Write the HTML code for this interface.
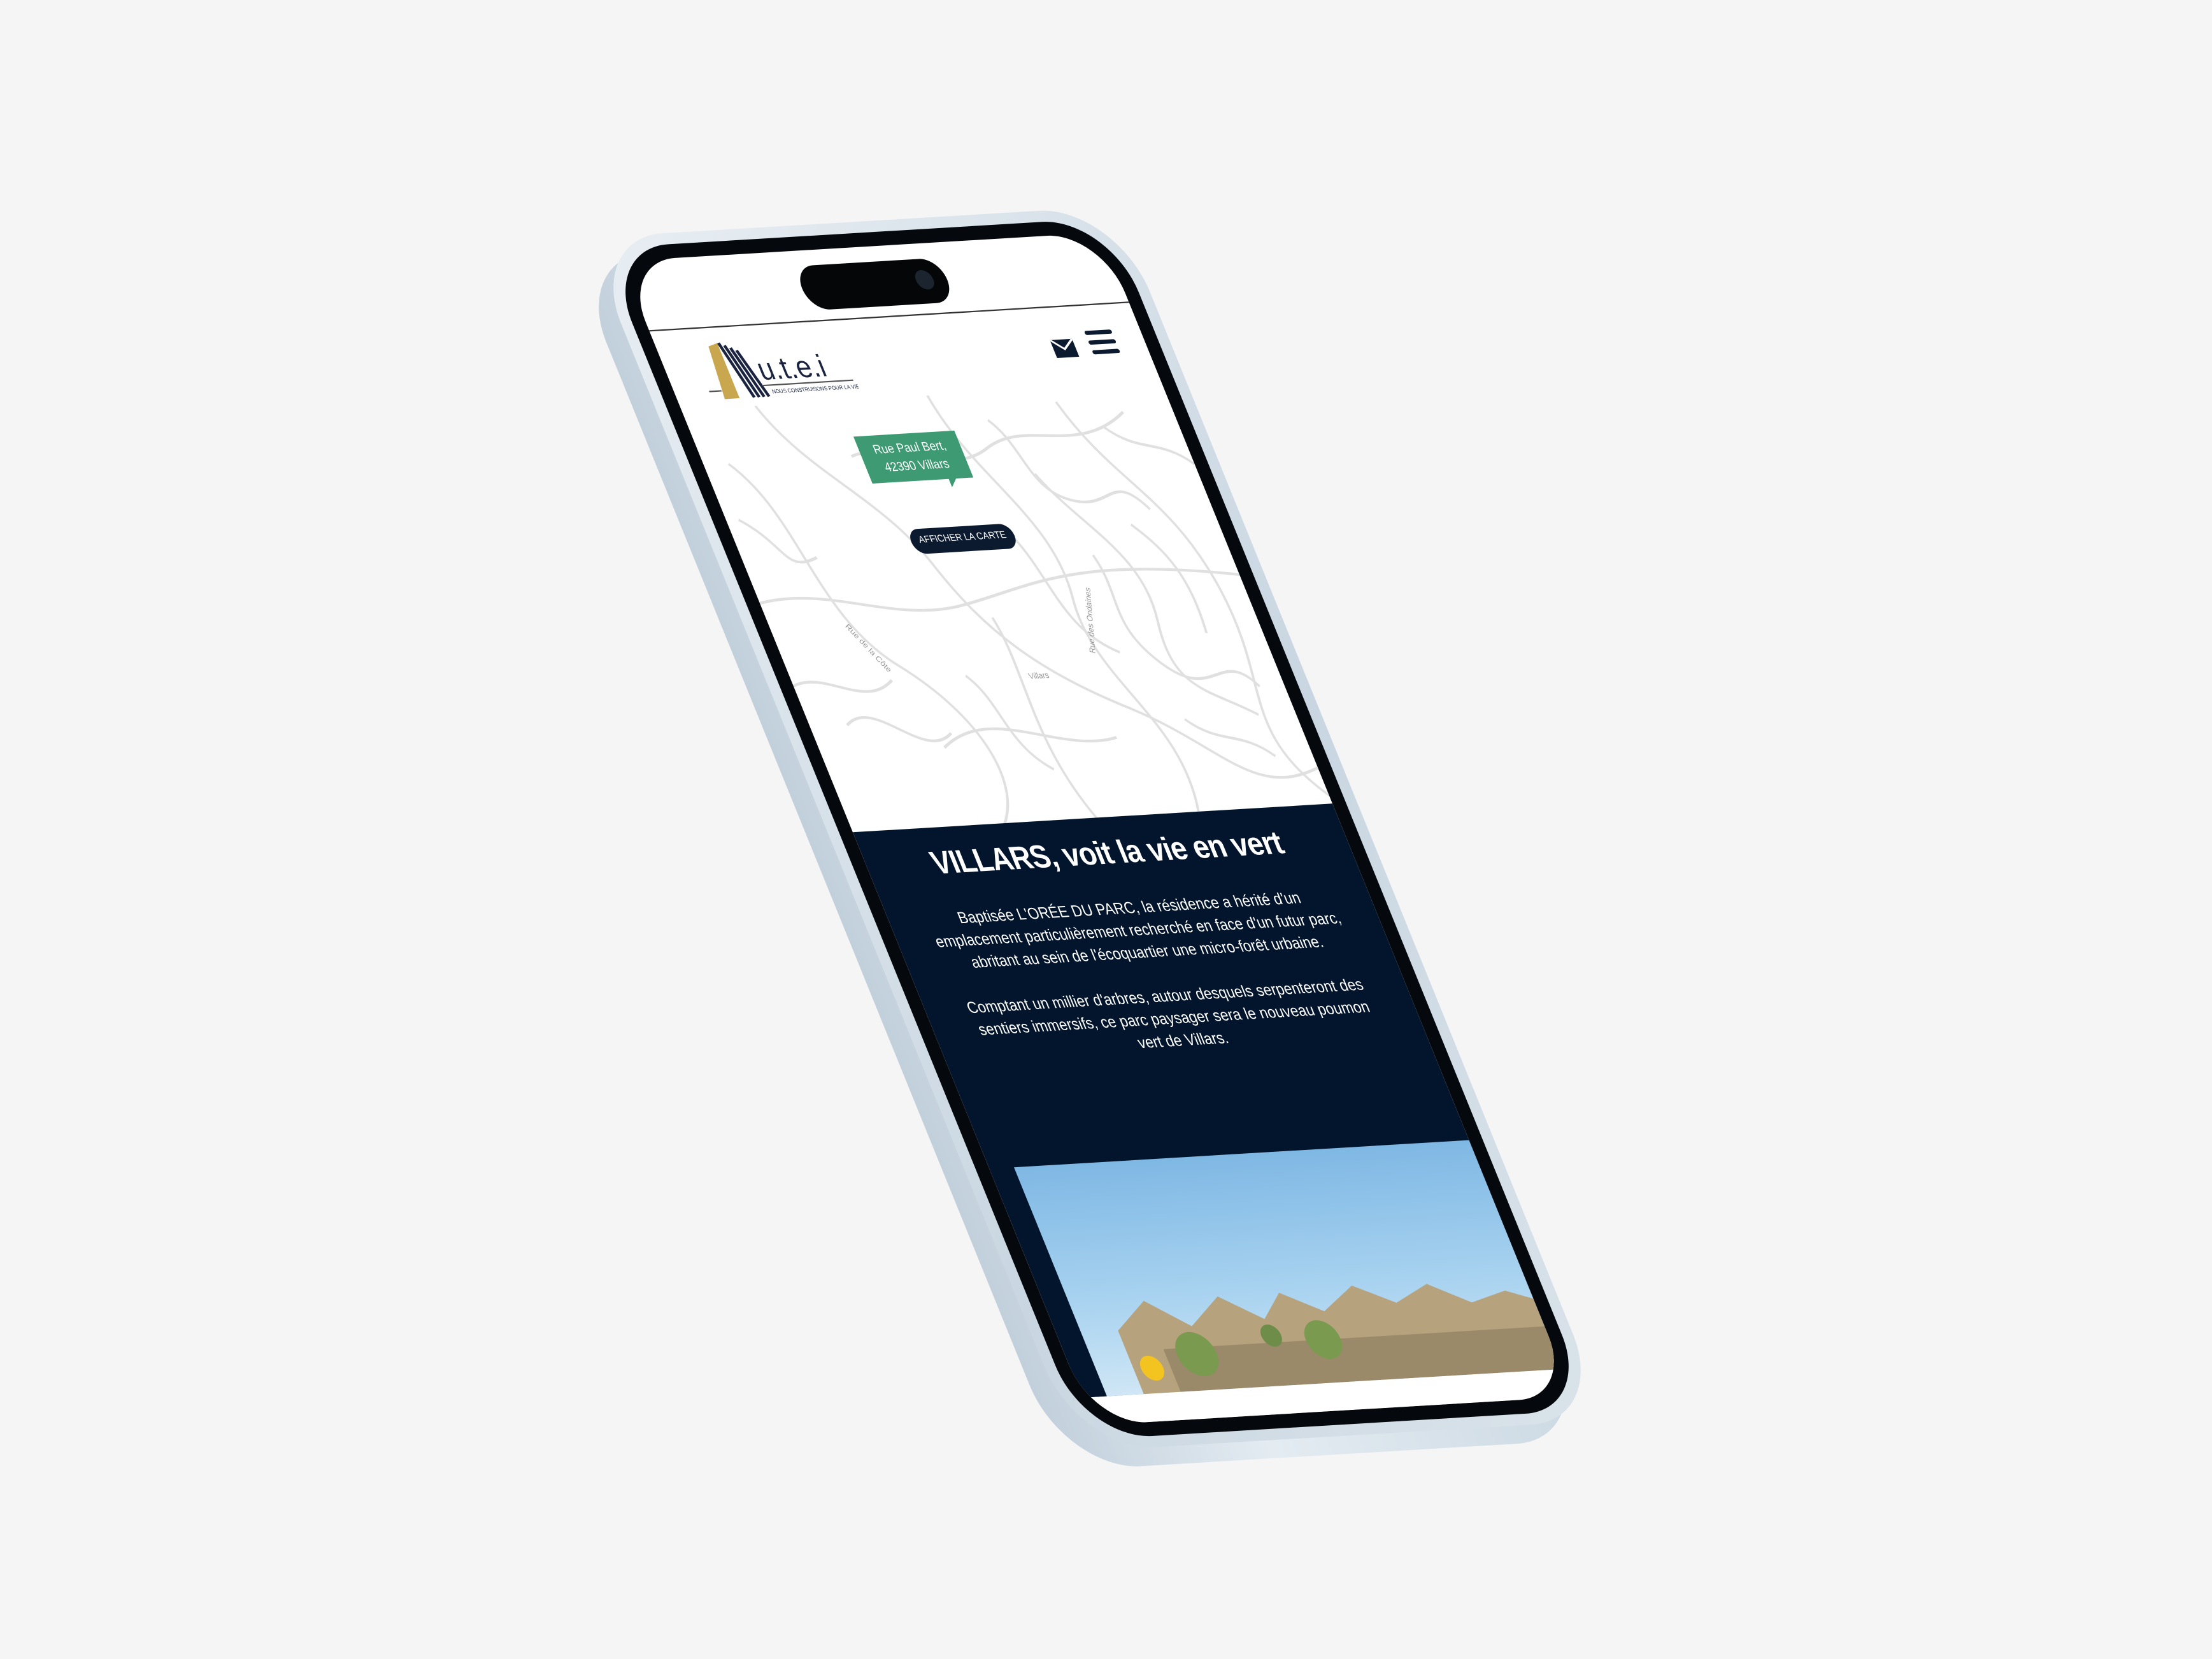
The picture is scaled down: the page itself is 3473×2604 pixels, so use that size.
<!DOCTYPE html>
<html><head><meta charset="utf-8"><style>
html,body{margin:0;padding:0}
body{width:3473px;height:2604px;background:#f5f5f5;position:relative;overflow:hidden;font-family:"Liberation Sans",sans-serif}
.t{position:absolute;left:0;top:0;width:390px;height:844px;transform-origin:0 0;transform:matrix(1.931,-0.1154,0.879,2.165,975,410)}
.abs{position:absolute}
</style></head><body>
<!-- phone side thickness -->
<div class="t" style="transform:matrix(1.931,-0.1154,0.879,2.165,952,440)">
  <div class="abs" style="left:-20px;top:-18px;width:430px;height:880px;border-radius:62px;background:linear-gradient(90deg,#c2d0dc,#e4ecf2 40%,#ccd9e3);"></div>
</div>
<div class="t">
  <div class="abs" style="left:-20px;top:-18px;width:430px;height:880px;border-radius:62px;background:linear-gradient(135deg,#e8eef3,#c9d6e1 60%,#dae3ea);"></div>
  <div class="abs" style="left:-11px;top:-10px;width:412px;height:864px;border-radius:54px;background:#05080c;"></div>
  <div class="abs" style="left:0;top:0;width:390px;height:844px;border-radius:44px;background:#fff;overflow:hidden">
    <div class="abs" style="left:135px;top:11px;width:118px;height:32px;border-radius:16px;background:#050608"></div>
    <div class="abs" style="left:228px;top:19px;width:14px;height:14px;border-radius:7px;background:#1c2430"></div>
    <div class="abs" style="left:0;top:50px;width:390px;height:1px;background:#333"></div>
    <svg class="abs" style="left:28px;top:58px" width="120" height="48" viewBox="0 0 120 48">
      <polygon points="14,6 22,4 22,44 10,44" fill="#c8a74e"/>
      <g stroke="#1a2440" stroke-width="2.5"><line x1="23" y1="4" x2="34" y2="44"/><line x1="27" y1="6" x2="38" y2="44"/><line x1="31" y1="8" x2="42" y2="44"/><line x1="35" y1="10" x2="46" y2="44"/></g>
      <line x1="0" y1="38" x2="10" y2="38" stroke="#555" stroke-width="1"/>
      <text x="46" y="32" font-size="22" fill="#1a2440" font-family="Liberation Sans">u.t.e.i</text>
      <line x1="44" y1="36" x2="118" y2="36" stroke="#555" stroke-width="1"/>
      <text x="50" y="42" font-size="4" fill="#1a2440">NOUS CONSTRUISONS POUR LA VIE</text>
    </svg>
    <div class="abs" style="left:315px;top:74px;width:18px;height:13px;background:#0c1a30"></div>
    <svg class="abs" style="left:315px;top:74px" width="18" height="13"><polyline points="0,0 9,7 18,0" fill="none" stroke="#fff" stroke-width="1.5"/></svg>
    <div class="abs" style="left:345px;top:69px;width:22px;height:3px;background:#0c1a30;border-radius:2px"></div>
    <div class="abs" style="left:345px;top:76px;width:22px;height:3px;background:#0c1a30;border-radius:2px"></div>
    <div class="abs" style="left:345px;top:83px;width:22px;height:3px;background:#0c1a30;border-radius:2px"></div>
    <svg class="abs" style="left:0;top:108px" width="390" height="310" viewBox="0 0 390 310">
      <g fill="none" stroke="#e0e0e0" stroke-width="2">
        <path d="M20,40 C60,80 40,150 90,190 S150,280 120,310"/>
        <path d="M60,0 C80,50 130,70 150,120 S200,200 260,230 S330,300 390,280"/>
        <path d="M200,0 C210,60 260,90 250,150 S300,240 280,310"/>
        <path d="M300,10 C320,70 360,80 370,150 S340,250 390,300"/>
        <path d="M0,140 C60,130 100,160 160,150 S260,120 390,140"/>
        <path d="M120,40 C150,30 190,60 230,40 S300,50 350,20"/>
        <path d="M100,250 C150,220 190,260 240,250"/>
        <path d="M180,160 C190,200 170,250 200,310"/>
        <path d="M260,60 C280,100 320,120 310,170 S330,220 360,240"/>
        <path d="M30,230 C60,210 80,260 110,240"/>
        <path d="M220,100 C240,130 230,170 270,190"/>
        <path d="M320,100 C340,120 350,140 345,180"/>
        <path d="M240,20 C260,40 250,70 280,80 S320,60 340,90"/>
        <path d="M280,120 C290,150 270,170 300,200 S350,190 370,220"/>
        <path d="M10,80 C40,100 30,120 60,110"/>
        <path d="M140,200 C160,220 150,250 180,270"/>
        <path d="M300,240 C320,260 340,250 360,270"/>
        <path d="M0,200 C30,190 50,220 80,200"/>
        <path d="M330,30 C350,50 370,40 390,60"/>
      </g>
      <g fill="#999" font-size="6"><text x="190" y="205">Villars</text><text x="60" y="160" transform="rotate(60 60 160)">Rue de la Côte</text><text x="250" y="190" transform="rotate(-70 250 190)">Rue des Ondaines</text></g>
    </svg>
    <div class="abs" style="left:128px;top:134px;width:82px;height:34px;background:#3d9a72;color:#fff;font-size:9px;text-align:center;line-height:13px;padding-top:4px;box-sizing:border-box">Rue Paul Bert,<br>42390 Villars</div>
    <div class="abs" style="left:190px;top:166px;width:0;height:0;border-left:8px solid #3d9a72;border-bottom:8px solid transparent"></div>
    <div class="abs" style="left:140px;top:202px;width:84px;height:18px;border-radius:9px;background:#0c1a30;color:#fff;font-size:7px;text-align:center;line-height:18px">AFFICHER LA CARTE</div>
    <div class="abs" style="left:0;top:414px;width:390px;height:410px;background:#03152c"></div>
    <div class="abs" style="left:0;top:426px;width:390px;text-align:center;color:#fff;font-size:23px;font-weight:bold;letter-spacing:-0.5px">VILLARS, voit la vie en vert</div>
    <div class="abs" style="left:28px;top:472px;width:334px;text-align:center;color:#fff;font-size:11.5px;line-height:16px">Baptisée L'ORÉE DU PARC, la résidence a hérité d'un emplacement particulièrement recherché en face d'un futur parc, abritant au sein de l'écoquartier une micro-forêt urbaine.<br><br>Comptant un millier d'arbres, autour desquels serpenteront des sentiers immersifs, ce parc paysager sera le nouveau poumon vert de Villars.</div>
    <div class="abs" style="left:20px;top:658px;width:370px;height:166px;background:linear-gradient(180deg,#7fb8e4,#a9d3f0 60%,#cfe6f5);overflow:hidden">
      <svg class="abs" style="left:0;top:0" width="370" height="166" viewBox="0 0 370 166">
        <polygon points="30,166 30,120 60,100 90,120 120,100 150,118 170,100 200,115 230,98 260,112 290,100 320,115 350,108 370,115 370,166" fill="#b7a27e"/>
        <rect x="60" y="135" width="310" height="31" fill="#9b8a6a"/>
        <circle cx="85" cy="140" r="16" fill="#7a9a50"/><circle cx="190" cy="135" r="14" fill="#7a9a50"/><circle cx="150" cy="130" r="8" fill="#6d8d48"/>
        <circle cx="45" cy="148" r="9" fill="#f3c420"/>
      </svg>
    </div>
    <div class="abs" style="left:0;top:824px;width:390px;height:20px;background:#fff"></div>
  </div>
</div>
</body></html>
